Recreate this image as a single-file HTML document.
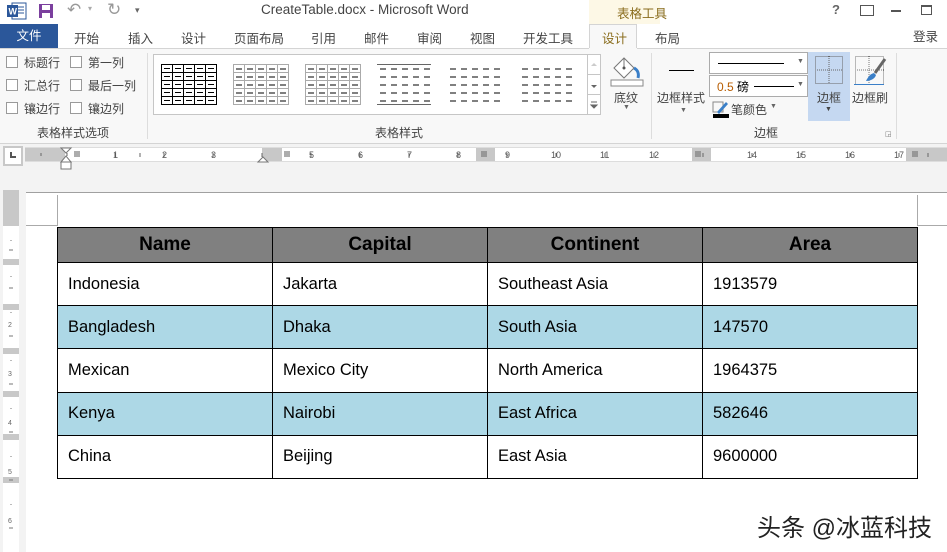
<!DOCTYPE html>
<html><head><meta charset="utf-8"><style>
*{margin:0;padding:0;box-sizing:border-box}
body{width:947px;height:552px;overflow:hidden;background:#f3f3f3;font-family:"Liberation Sans","Noto Sans CJK SC",sans-serif;position:relative;font-size:12px;color:#444}
.a{position:absolute;white-space:nowrap}
.cb{position:absolute;width:12px;height:12px;border:1px solid #9a9a9a;background:#fff}
table{border-collapse:collapse;position:absolute;left:57px;top:227px;width:861px;font-family:"Liberation Sans",sans-serif;font-size:16.5px;color:#000}
td{border:1px solid #000;padding-left:10px;height:43.2px;width:215px}
tr.h td{background:#808080;font-weight:bold;font-size:19px;text-align:center;padding:0;height:35px}
tr.b td{background:#add8e6}
</style></head><body>
<!-- title bar -->
<div class="a" style="left:0;top:0;width:947px;height:24px;background:#fff"></div>
<svg class="a" style="left:7px;top:2px" width="20" height="18"><rect x="5" y="1" width="14" height="16" fill="#fff" stroke="#2b579a"/><line x1="11" y1="5" x2="17" y2="5" stroke="#2b579a"/><line x1="11" y1="8" x2="17" y2="8" stroke="#2b579a"/><line x1="11" y1="11" x2="17" y2="11" stroke="#2b579a"/><rect x="0" y="3" width="11" height="12" fill="#2b579a"/><text x="1.5" y="12.5" font-size="9" fill="#fff" font-family="Liberation Sans" font-weight="bold">W</text></svg>
<svg class="a" style="left:38px;top:3px" width="16" height="16"><rect x="1" y="1" width="14" height="14" fill="#7b3f9e"/><rect x="4" y="2" width="8" height="5" fill="#fff"/><rect x="4" y="10" width="8" height="5" fill="#fff"/></svg>
<div class="a" style="left:67px;top:0;font-size:17px;color:#999">↶</div>
<div class="a" style="left:88px;top:4px;font-size:8px;color:#aaa">▾</div>
<div class="a" style="left:107px;top:0;font-size:17px;color:#999">↻</div>
<div class="a" style="left:135px;top:5px;font-size:9px;color:#666">▾</div>
<div class="a" style="left:261px;top:2px;font-size:13.5px;color:#444">CreateTable.docx - Microsoft Word</div>
<div class="a" style="left:589px;top:0;width:71px;height:48px;background:#fdf8e6"></div>
<div class="a" style="left:617px;top:3px;font-size:12.5px;color:#8a6d1d">表格工具</div>
<div class="a" style="left:832px;top:2px;font-size:13px;color:#666;font-weight:bold">?</div>
<div class="a" style="left:860px;top:5px;width:14px;height:11px;border:1px solid #555"></div>
<div class="a" style="left:891px;top:10px;width:10px;height:2px;background:#555"></div>
<div class="a" style="left:921px;top:5px;width:11px;height:10px;border:1px solid #555;border-top-width:2px"></div>
<!-- tabs -->
<div class="a" style="left:0;top:24px;width:947px;height:24px;background:#fff"></div>
<div class="a" style="left:0;top:24px;width:58px;height:24px;background:#2b579a;color:#fff;font-size:12.5px;text-align:center;line-height:24px">文件</div>
<div class="a" style="left:74px;top:28px;font-size:12.5px;color:#444">开始</div>
<div class="a" style="left:128px;top:28px;font-size:12.5px;color:#444">插入</div>
<div class="a" style="left:181px;top:28px;font-size:12.5px;color:#444">设计</div>
<div class="a" style="left:234px;top:28px;font-size:12.5px;color:#444">页面布局</div>
<div class="a" style="left:311px;top:28px;font-size:12.5px;color:#444">引用</div>
<div class="a" style="left:364px;top:28px;font-size:12.5px;color:#444">邮件</div>
<div class="a" style="left:417px;top:28px;font-size:12.5px;color:#444">审阅</div>
<div class="a" style="left:470px;top:28px;font-size:12.5px;color:#444">视图</div>
<div class="a" style="left:523px;top:28px;font-size:12.5px;color:#444">开发工具</div>
<div class="a" style="left:589px;top:24px;width:48px;height:25px;background:#f8f8f8;border:1px solid #d4d4d4;border-bottom:none"></div>
<div class="a" style="left:602px;top:28px;font-size:12.5px;color:#8a6d1d">设计</div>
<div class="a" style="left:655px;top:28px;font-size:12.5px;color:#444">布局</div>
<div class="a" style="left:913px;top:26px;font-size:12.5px;color:#444">登录</div>
<div class="a" style="left:0;top:48px;width:947px;height:1px;background:#d4d4d4"></div>
<div class="a" style="left:589px;top:48px;width:48px;height:1px;background:#f8f8f8"></div>
<!-- ribbon -->
<div class="a" style="left:0;top:49px;width:947px;height:94px;background:#f8f8f8"></div>
<div class="a" style="left:0;top:143px;width:947px;height:1px;background:#d4d4d4"></div>
<div class="cb" style="left:6px;top:56px"></div><div class="a" style="left:24px;top:54px">标题行</div>
<div class="cb" style="left:6px;top:79px"></div><div class="a" style="left:24px;top:77px">汇总行</div>
<div class="cb" style="left:6px;top:102px"></div><div class="a" style="left:24px;top:100px">镶边行</div>
<div class="cb" style="left:70px;top:56px"></div><div class="a" style="left:88px;top:54px">第一列</div>
<div class="cb" style="left:70px;top:79px"></div><div class="a" style="left:88px;top:77px">最后一列</div>
<div class="cb" style="left:70px;top:102px"></div><div class="a" style="left:88px;top:100px">镶边列</div>
<div class="a" style="left:37px;top:124px">表格样式选项</div>
<div class="a" style="left:147px;top:53px;width:1px;height:86px;background:#ddd"></div>
<div class="a" style="left:153px;top:54px;width:448px;height:61px;background:#fff;border:1px solid #c6c6c6"></div>
<svg class="a" style="left:153px;top:54px" width="448" height="61">
<g stroke="#000" stroke-width="1"><rect x="8.5" y="10.5" width="55" height="40" fill="none"/>
<path d="M8 18.5h56M8 26.5h56M8 34.5h56M8 42.5h56M19.5 10v41M30.5 10v41M41.5 10v41M52.5 10v41"/></g>
<g stroke="#aaa"><rect x="80.5" y="10.5" width="55" height="40" fill="none"/><path d="M80 18.5h56M80 26.5h56M80 34.5h56M80 42.5h56M91.5 10v41M102.5 10v41M113.5 10v41M124.5 10v41"/>
<rect x="152.5" y="10.5" width="55" height="40" fill="none"/><path d="M152 18.5h56M152 26.5h56M152 34.5h56M152 42.5h56M163.5 10v41M174.5 10v41M185.5 10v41M196.5 10v41"/></g>
<path d="M224 10.5h54M224 50.5h54" stroke="#666"/>
<g stroke="#000" stroke-dasharray="6 5"><path d="M83 15h52M83 23h52M83 31h52M83 39h52M83 47h52M155 15h52M155 23h52M155 31h52M155 39h52M155 47h52M227 15h52M227 23h52M227 31h52M227 39h52M227 47h52M297 15h52M297 23h52M297 31h52M297 39h52M297 47h52M369 15h52M369 23h52M369 31h52M369 39h52M369 47h52"/></g>
<g stroke="#000"><path d="M11 14.5h6M22 14.5h6M33 14.5h6M44 14.5h6M55 14.5h6M11 22.5h6M22 22.5h6M33 22.5h6M44 22.5h6M55 22.5h6M11 30.5h6M22 30.5h6M33 30.5h6M44 30.5h6M55 30.5h6M11 38.5h6M22 38.5h6M33 38.5h6M44 38.5h6M55 38.5h6M11 46.5h6M22 46.5h6M33 46.5h6M44 46.5h6M55 46.5h6"/></g>
<rect x="434.5" y="0.5" width="13" height="60" fill="#fff" stroke="#c6c6c6"/><path d="M434 20.5h14M434 40.5h14" stroke="#c6c6c6"/>
<path d="M438 12l3-3 3 3z" fill="#ccc"/><path d="M438 31l3 3 3-3z" fill="#666"/><path d="M438 48h6M438 51l3 3 3-3z" stroke="#666" fill="#666"/>
</svg>
<div class="a" style="left:375px;top:124px">表格样式</div>
<svg class="a" style="left:608px;top:54px" width="36" height="34"><path d="M6 14l10-10 10 10-10 10z" fill="#fff" stroke="#777"/><path d="M16 4v9" stroke="#777"/><circle cx="16" cy="14" r="1.5" fill="#555"/><path d="M26 14c4 2 5 6 4 10" stroke="#3a7fc8" stroke-width="3" fill="none"/><rect x="3" y="26" width="32" height="6" fill="#fff" stroke="#888"/></svg>
<div class="a" style="left:614px;top:89px">底纹</div>
<div class="a" style="left:623px;top:104px;font-size:7px;color:#666">▼</div>
<div class="a" style="left:651px;top:53px;width:1px;height:86px;background:#ddd"></div>
<div class="a" style="left:669px;top:70px;width:25px;height:1px;background:#000"></div>
<div class="a" style="left:657px;top:89px">边框样式</div>
<div class="a" style="left:680px;top:107px;font-size:7px;color:#666">▼</div>
<div class="a" style="left:709px;top:52px;width:99px;height:22px;background:#fff;border:1px solid #ababab"></div>
<div class="a" style="left:718px;top:63px;width:66px;height:1px;background:#000"></div>
<div class="a" style="left:797px;top:58px;font-size:7px;color:#666">▼</div>
<div class="a" style="left:709px;top:75px;width:99px;height:22px;background:#fff;border:1px solid #ababab"></div>
<div class="a" style="left:717px;top:78px;font-size:12px;color:#000"><span style="color:#b75c00">0.5</span> 磅</div>
<div class="a" style="left:754px;top:86px;width:40px;height:1px;background:#000"></div>
<div class="a" style="left:797px;top:81px;font-size:7px;color:#666">▼</div>
<svg class="a" style="left:712px;top:100px" width="18" height="18"><rect x="1" y="2" width="10" height="10" fill="none" stroke="#888"/><path d="M5 12l9-10 2 2-9 10z" fill="#3a7fc8"/><rect x="1" y="14" width="16" height="4" fill="#000"/></svg>
<div class="a" style="left:731px;top:101px">笔颜色</div>
<div class="a" style="left:770px;top:103px;font-size:7px;color:#666">▼</div>
<div class="a" style="left:808px;top:52px;width:42px;height:69px;background:#c5d8f1"></div>
<svg class="a" style="left:814px;top:55px" width="30" height="30"><g stroke="#666" stroke-dasharray="1 1" fill="none"><rect x="1.5" y="1.5" width="27" height="27"/><path d="M15 1v28M1 15h28"/></g></svg>
<div class="a" style="left:817px;top:89px">边框</div>
<div class="a" style="left:825px;top:106px;font-size:7px;color:#444">▼</div>
<svg class="a" style="left:854px;top:55px" width="34" height="34"><g stroke="#777" stroke-dasharray="1 1" fill="none"><rect x="1.5" y="1.5" width="28" height="28"/><path d="M15 1v29M1 15h29"/></g><path d="M0 29.5h30" stroke="#3a7fc8"/><path d="M31 4l-10 14" stroke="#666" stroke-width="3"/><path d="M20 18c-4 1-6 4-8 8 4 0 9-2 10-6z" fill="#3a7fc8"/></svg>
<div class="a" style="left:852px;top:89px">边框刷</div>
<div class="a" style="left:754px;top:124px">边框</div>
<div class="a" style="left:885px;top:130px;font-size:7px;color:#777">◲</div>
<div class="a" style="left:896px;top:53px;width:1px;height:86px;background:#ddd"></div>
<!-- ruler -->
<div class="a" style="left:3px;top:146px;width:20px;height:20px;background:#fff;border:2px solid #c8c8c8"></div>
<div class="a" style="left:10px;top:152px;width:6px;height:6px;border-left:2px solid #555;border-bottom:2px solid #555"></div>
<div class="a" style="left:25px;top:147px;width:922px;height:15px;background:#fff;border-top:1px solid #ddd;border-bottom:1px solid #ddd"></div>
<div class="a" style="left:25px;top:148px;width:40px;height:13px;background:#c8c8c8"></div>
<div class="a" style="left:262px;top:148px;width:20px;height:13px;background:#c8c8c8"></div>
<div class="a" style="left:476px;top:148px;width:19px;height:13px;background:#c8c8c8"></div>
<div class="a" style="left:692px;top:148px;width:19px;height:13px;background:#c8c8c8"></div>
<div class="a" style="left:906px;top:148px;width:41px;height:13px;background:#c8c8c8"></div>
<svg class="a" style="left:25px;top:147px" width="922" height="28" font-family="Liberation Sans" font-size="9" fill="#555">
<g stroke="#666">
<path d="M16 6v3M42 6v3M90 6v4M115 6v4M139 6v4M188 6v4M237 6v4M286 6v4M335 6v4M384 6v4M433 6v4M482 6v4M531 6v4M580 6v4M629 6v4M678 6v4M727 6v4M776 6v4M825 6v4M874 6v4M903 6v4"/>
</g>
<text x="88" y="11">1</text><text x="137" y="11">2</text><text x="186" y="11">3</text><text x="284" y="11">5</text><text x="333" y="11">6</text><text x="382" y="11">7</text><text x="431" y="11">8</text><text x="480" y="11">9</text><text x="526" y="11">10</text><text x="575" y="11">11</text><text x="624" y="11">12</text><text x="722" y="11">14</text><text x="771" y="11">15</text><text x="820" y="11">16</text><text x="869" y="11">17</text>
<path d="M36 1l5 5 5-5zM36 15l5-6 5 6zM36 15h10v7H36z" fill="#fff" stroke="#777"/>
<path d="M233 15l5-5 5 5z" fill="#fff" stroke="#777"/>
<g fill="#777"><rect x="49" y="4" width="6" height="6" opacity=".6"/><rect x="259" y="4" width="6" height="6" opacity=".6"/><rect x="456" y="4" width="6" height="6" opacity=".6"/><rect x="670" y="4" width="6" height="6" opacity=".6"/><rect x="887" y="4" width="6" height="6" opacity=".6"/></g>
</svg>
<!-- vertical ruler -->
<div class="a" style="left:3px;top:190px;width:16px;height:362px;background:#fff"></div>
<div class="a" style="left:3px;top:190px;width:16px;height:36px;background:#c8c8c8"></div>
<div class="a" style="left:3px;top:259px;width:16px;height:6px;background:#c8c8c8"></div>
<div class="a" style="left:3px;top:304px;width:16px;height:6px;background:#c8c8c8"></div>
<div class="a" style="left:3px;top:348px;width:16px;height:6px;background:#c8c8c8"></div>
<div class="a" style="left:3px;top:391px;width:16px;height:6px;background:#c8c8c8"></div>
<div class="a" style="left:3px;top:434px;width:16px;height:6px;background:#c8c8c8"></div>
<div class="a" style="left:3px;top:477px;width:16px;height:6px;background:#c8c8c8"></div>
<svg class="a" style="left:3px;top:226px" width="16" height="326" font-size="7" fill="#666" font-family="Liberation Sans"><g stroke="#777"><path d="M8 14v1M6 24h4M8 50v1M6 62h4M8 86v1M6 110h4M8 134v1M6 158h4M8 182v1M6 206h4M8 230v1M6 254h4M8 278v1M6 302h4"/></g>
<text x="5" y="101">2</text><text x="5" y="150">3</text><text x="5" y="199">4</text><text x="5" y="248">5</text><text x="5" y="297">6</text></svg>
<!-- page -->
<div class="a" style="left:26px;top:192px;width:921px;height:360px;background:#fff;border-top:1px solid #a0a0a0"></div>
<div class="a" style="left:57px;top:195px;width:1px;height:30px;background:#aaa"></div>
<div class="a" style="left:26px;top:225px;width:32px;height:1px;background:#aaa"></div>
<div class="a" style="left:917px;top:195px;width:1px;height:30px;background:#aaa"></div>
<div class="a" style="left:917px;top:225px;width:30px;height:1px;background:#aaa"></div>
<table>
<tr class="h"><td>Name</td><td>Capital</td><td>Continent</td><td>Area</td></tr>
<tr><td>Indonesia</td><td>Jakarta</td><td>Southeast Asia</td><td>1913579</td></tr>
<tr class="b"><td>Bangladesh</td><td>Dhaka</td><td>South Asia</td><td>147570</td></tr>
<tr><td>Mexican</td><td>Mexico City</td><td>North America</td><td>1964375</td></tr>
<tr class="b"><td>Kenya</td><td>Nairobi</td><td>East Africa</td><td>582646</td></tr>
<tr><td>China</td><td>Beijing</td><td>East Asia</td><td>9600000</td></tr>
</table>
<div class="a" style="left:757px;top:508px;font-size:24px;color:#222">头条 @冰蓝科技</div>
</body></html>
